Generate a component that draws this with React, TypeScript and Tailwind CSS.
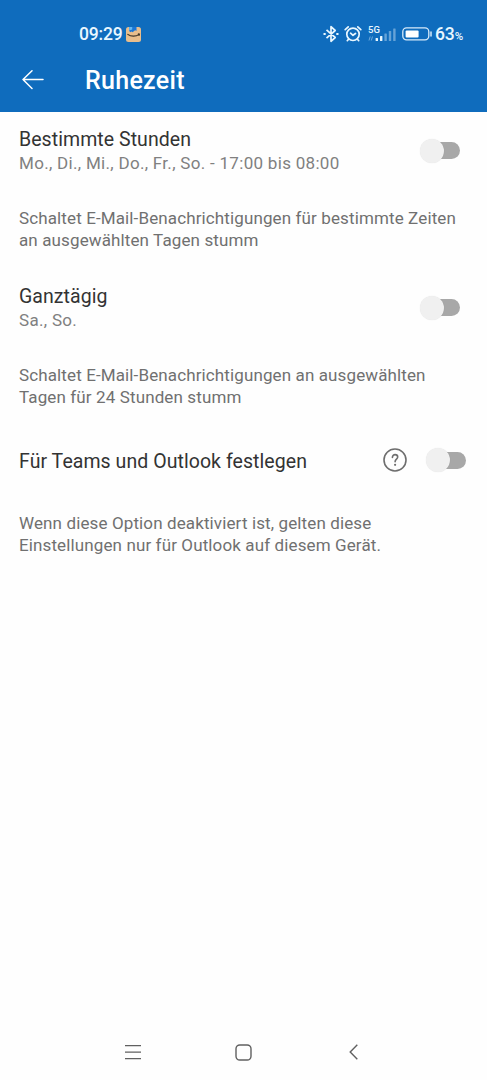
import type { ReactNode } from "react";

function BluetoothIcon() {
  return (
    <svg className="h-[18px] w-4" viewBox="0 0 16 18" fill="none" stroke="currentColor" strokeWidth="1.7" strokeLinejoin="round">
      <path d="M3.5 4.8l8.7 7.7-4.2 3.8V1.7l4.2 3.8-8.7 7.7" />
      <path d="M.5 9h2.2M13.3 9h2.2" strokeWidth="2" />
    </svg>
  );
}

function AlarmIcon() {
  return (
    <svg className="h-[18px] w-[18px]" viewBox="0 0 18 18" fill="none" stroke="currentColor" strokeWidth="1.7" strokeLinecap="round" strokeLinejoin="round">
      <circle cx="9" cy="9.3" r="6.2" />
      <path d="M6.6 8.2L9 10.3l2.5-1.8M1.2 4.6l3-2.7M16.8 4.6l-3-2.7M4.3 14.4l-1 1.3M13.7 14.4l1 1.3" />
    </svg>
  );
}

function SignalIcon() {
  return (
    <svg className="h-[18px] w-[29px]" viewBox="0 0 29 18" fill="currentColor">
      <text x="0" y="7.8" fontSize="9.5" fontWeight="500" fontFamily="Roboto">
        5G
      </text>
      <path d="M1 15.5l1.2-4M3.3 15.5l1.2-4" stroke="currentColor" strokeWidth=".8" opacity=".55" />
      <rect x="7.6" y="13" width="2.4" height="3" rx=".5" />
      <rect x="12" y="11" width="2.4" height="5" rx=".5" />
      <g opacity=".4">
        <rect x="16.4" y="8.5" width="2.4" height="7.5" rx=".5" />
        <rect x="20.8" y="6" width="2.4" height="10" rx=".5" />
        <rect x="25.2" y="3.5" width="2.4" height="12.5" rx=".5" />
      </g>
    </svg>
  );
}

function BatteryIcon() {
  return (
    <svg className="h-[14px] w-[30px]" viewBox="0 0 30 14" fill="none">
      <rect x=".8" y=".9" width="26" height="12" rx="3.8" stroke="#d7eafa" strokeWidth="1.3" />
      <rect x="3.6" y="3.5" width="13" height="7" rx="1" fill="#fff" />
      <path d="M29 5v4" stroke="#d7eafa" strokeWidth="1.5" strokeLinecap="round" />
    </svg>
  );
}

function PackageIcon() {
  return (
    <svg className="h-[15px] w-[15px]" viewBox="0 0 15 15">
      <rect width="15" height="15" rx="2.5" fill="#e8bd8c" />
      <path d="M3.2 0h7.3v4l-1.2-.8-1.3.9-1.2 1.2-1.3-.8-1.2.7L3.2 4z" fill="#1976d8" />
      <path d="M3.2 0h3v2.5l-3 1z" fill="#62b8f3" />
      <path d="M1.8 7.4c3 2.4 8.2 2.4 11.3 0M12.4 6.9l1 .2-.3 1.2" fill="none" stroke="#403629" strokeWidth="1.2" strokeLinecap="round" />
    </svg>
  );
}

function StatusBar() {
  return (
    <div className="flex h-[48px] items-center pt-5 pr-6 pl-[79px] text-[#e9f7ff]">
      <span className="w-[43px] text-[17.5px] leading-7 font-medium tracking-[-0.2px] whitespace-nowrap">09:29</span>
      <span className="ml-1">
        <PackageIcon />
      </span>
      <div className="ml-auto flex items-center">
        <BluetoothIcon />
        <span className="ml-[5px]">
          <AlarmIcon />
        </span>
        <span className="ml-[6px]">
          <SignalIcon />
        </span>
        <span className="ml-[5px]">
          <BatteryIcon />
        </span>
        <span className="ml-[3px] w-[28px] pt-0.5 text-[17.5px] leading-7 font-medium tracking-[-0.1px] whitespace-nowrap">
          63<span className="text-[11.5px]">%</span>
        </span>
      </div>
    </div>
  );
}

function Header() {
  return (
    <header className="h-[112px] bg-[#0f6cbd]">
      <StatusBar />
      <div className="flex h-16 items-center pl-[22px]">
        <svg className="h-5 w-[22px] text-white" viewBox="0 0 22 20" fill="none" stroke="currentColor" strokeWidth="1.5" strokeLinecap="round" strokeLinejoin="round">
          <path d="M21 9.5H1M10 .8L1 9.5l9 9" />
        </svg>
        <h1 className="ml-[41px] pt-0.5 text-[25px] leading-8 font-medium tracking-[0.3px] text-white">Ruhezeit</h1>
      </div>
    </header>
  );
}

function Toggle() {
  return (
    <button type="button" role="switch" aria-checked="false" className="flex h-6 w-[40.5px] shrink-0 items-center">
      <span className="z-10 h-6 w-6 shrink-0 rounded-full bg-[#f0f0f0] shadow-[0_0_1px_rgba(0,0,0,0.12)]" />
      <span className="-ml-4 h-[17px] w-[32.5px] rounded-full bg-[#a8a8a8]" />
    </button>
  );
}

function HelpIcon() {
  return (
    <svg className="h-6 w-6 shrink-0" viewBox="0 0 24 24" fill="none" stroke="#6e6e6e" strokeWidth="1.6" strokeLinecap="round">
      <circle cx="12" cy="12" r="11" />
      <path d="M9.4 9.4c0-3.8 5.3-3.5 5.3-.3 0 2-2.6 2.2-2.6 4.6" />
      <circle cx="12.1" cy="16.8" r="1.1" fill="#6e6e6e" stroke="none" />
    </svg>
  );
}

function Description({ children }: { children: ReactNode }) {
  return <p className="-mt-px mb-px text-[17px] leading-[22px] tracking-[0.12px] whitespace-nowrap text-[#707070]">{children}</p>;
}

function SettingRow({ title, value }: { title: string; value: string }) {
  return (
    <div className="flex h-12 items-center justify-between pr-[27px]">
      <div className="whitespace-nowrap">
        <h2 className="text-[19.5px] leading-[23px] tracking-[0.06px] text-[#333]">{title}</h2>
        <p className="text-[17px] leading-[25px] tracking-[0.3px] text-[#808080]">{value}</p>
      </div>
      <span className="mb-[3px]">
        <Toggle />
      </span>
    </div>
  );
}

function NavigationBar() {
  return (
    <nav className="mt-auto flex h-14 items-center pl-[125px] text-[#606060]">
      <svg className="h-4 w-4" viewBox="0 0 16 16" stroke="currentColor" strokeWidth="1.3">
        <path d="M0 1.7h16M0 8.2h16M0 14.7h16" />
      </svg>
      <svg className="ml-[94px] h-[17px] w-[17px]" viewBox="0 0 17 17" fill="none" stroke="currentColor" strokeWidth="1.4">
        <rect x="1" y="1" width="15" height="15" rx="3.8" />
      </svg>
      <svg className="ml-[97px] h-4 w-[9px]" viewBox="0 0 9 16" fill="none" stroke="currentColor" strokeWidth="1.4">
        <path d="M8.3.8L1.2 8l7.1 7.2" />
      </svg>
    </nav>
  );
}

export default function App() {
  return (
    <div className="flex h-[1080px] w-[487px] flex-col bg-[#fefefe] font-['Roboto',sans-serif]">
      <Header />
      <main className="flex flex-col pt-4 pl-[19px]">
        <SettingRow title="Bestimmte Stunden" value="Mo., Di., Mi., Do., Fr., So. - 17:00 bis 08:00" />
        <div className="pt-8">
          <Description>
            Schaltet E-Mail-Benachrichtigungen für bestimmte Zeiten
            <br />
            an ausgewählten Tagen stumm
          </Description>
        </div>
        <div className="pt-[33px]">
          <SettingRow title="Ganztägig" value="Sa., So." />
        </div>
        <div className="pt-8">
          <Description>
            Schaltet E-Mail-Benachrichtigungen an ausgewählten
            <br />
            Tagen für 24 Stunden stumm
          </Description>
        </div>
        <div className="mt-10 flex h-6 items-center pr-[21px]">
          <h2 className="mr-auto pt-px text-[19.5px] leading-6 tracking-[0.06px] text-[#333]">Für Teams und Outlook festlegen</h2>
          <div className="mb-0.5 flex items-center gap-[19px]">
            <HelpIcon />
            <Toggle />
          </div>
        </div>
        <div className="pt-10">
          <Description>
            Wenn diese Option deaktiviert ist, gelten diese
            <br />
            Einstellungen nur für Outlook auf diesem Gerät.
          </Description>
        </div>
      </main>
      <NavigationBar />
    </div>
  );
}
